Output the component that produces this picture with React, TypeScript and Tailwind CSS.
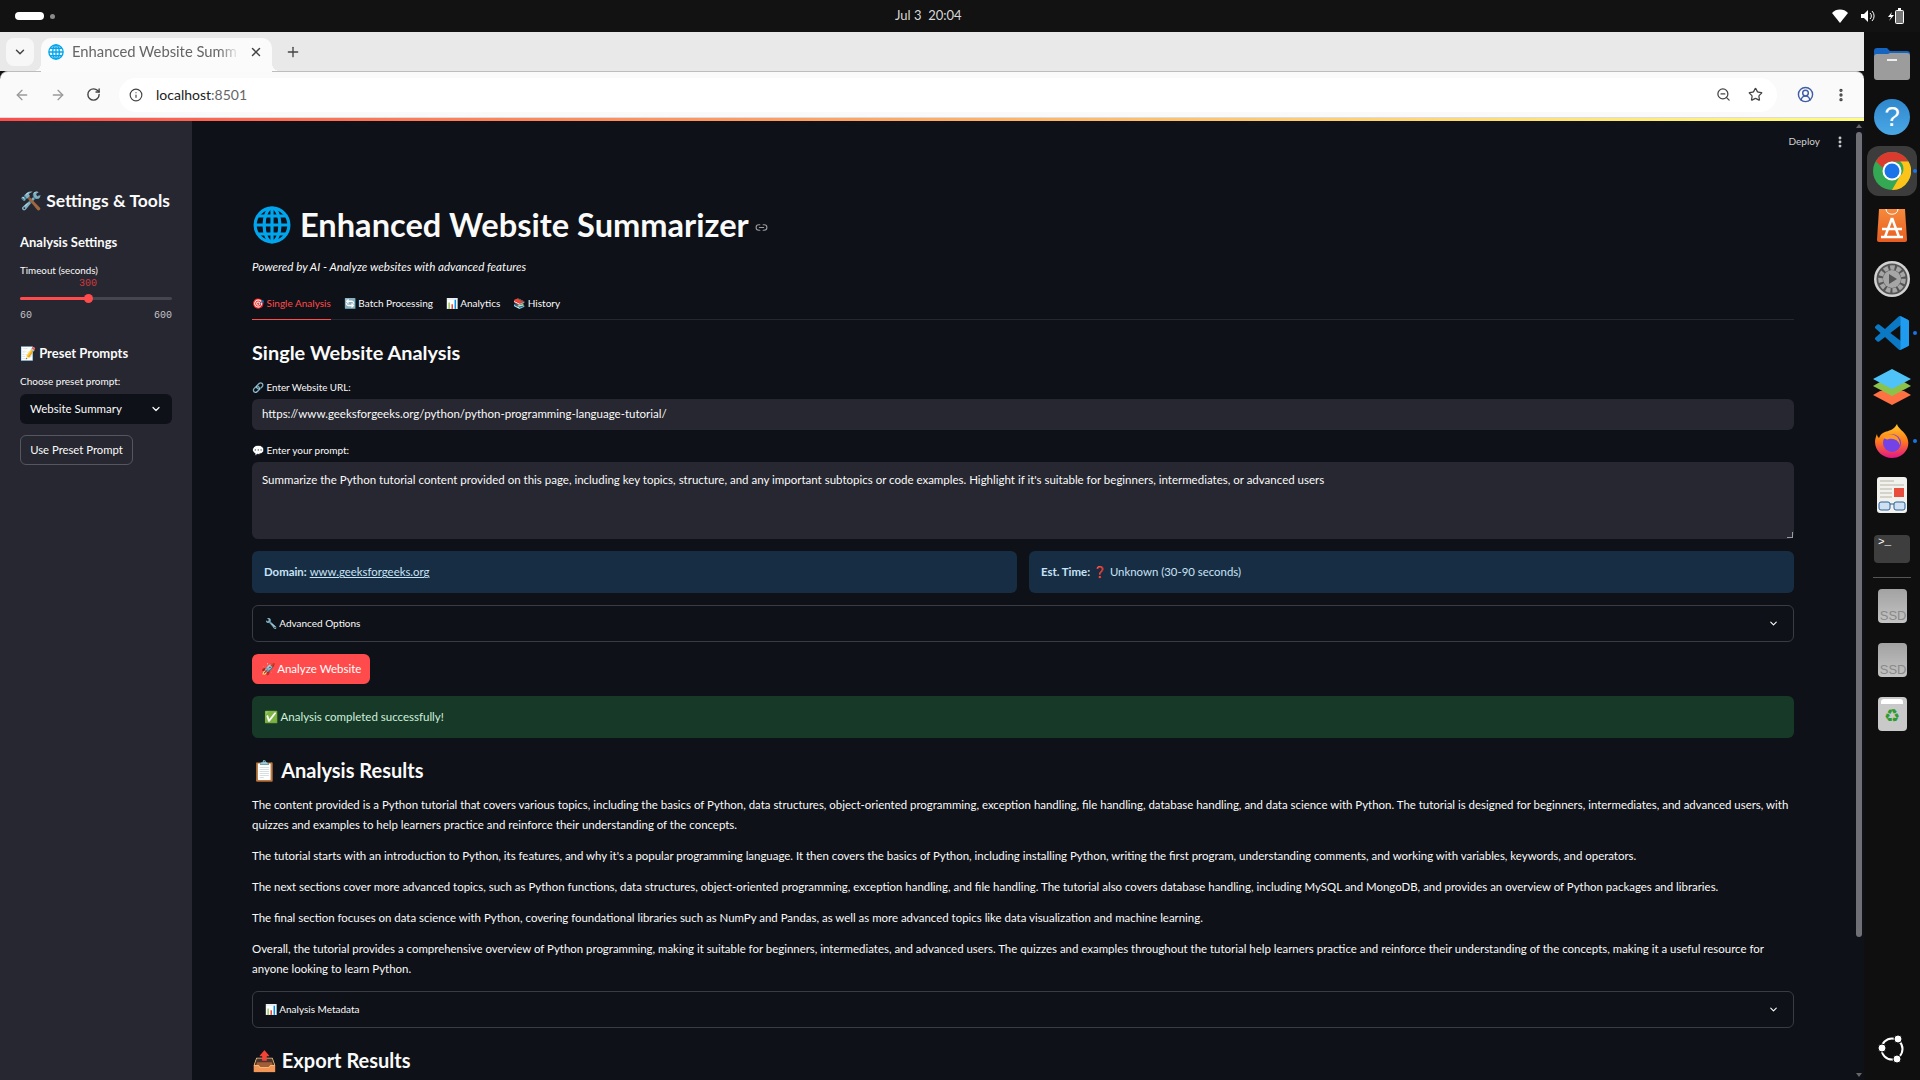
import { ChevronDown, X, Plus, ArrowLeft, ArrowRight, RotateCw, Info, ZoomOut, Star, CircleUserRound, EllipsisVertical, Link2 } from "lucide-react";

const paragraphs = [
  "The content provided is a Python tutorial that covers various topics, including the basics of Python, data structures, object-oriented programming, exception handling, file handling, database handling, and data science with Python. The tutorial is designed for beginners, intermediates, and advanced users, with quizzes and examples to help learners practice and reinforce their understanding of the concepts.",
  "The tutorial starts with an introduction to Python, its features, and why it's a popular programming language. It then covers the basics of Python, including installing Python, writing the first program, understanding comments, and working with variables, keywords, and operators.",
  "The next sections cover more advanced topics, such as Python functions, data structures, object-oriented programming, exception handling, and file handling. The tutorial also covers database handling, including MySQL and MongoDB, and provides an overview of Python packages and libraries.",
  "The final section focuses on data science with Python, covering foundational libraries such as NumPy and Pandas, as well as more advanced topics like data visualization and machine learning.",
  "Overall, the tutorial provides a comprehensive overview of Python programming, making it suitable for beginners, intermediates, and advanced users. The quizzes and examples throughout the tutorial help learners practice and reinforce their understanding of the concepts, making it a useful resource for anyone looking to learn Python.",
];

function Globe({ size }: { size: number }) {
  return (
    <svg width={size} height={size} viewBox="0 0 36 36" fill="none" stroke="#00a6ed" strokeWidth="3" className="shrink-0">
      <circle cx="18" cy="18" r="16" />
      <ellipse cx="18" cy="18" rx="7.5" ry="16" />
      <path d="M18 2v32M2 18h32M5 9.500h26M5 26.500h26" />
    </svg>
  );
}

function DockSlot({ children }: { children: React.ReactNode }) {
  return <div className="flex h-[54px] shrink-0 items-center justify-center">{children}</div>;
}

function RunDot({ top, right }: { top: string; right: string }) {
  return <span className={`absolute ${top} ${right} h-[4px] w-[4px] rounded-full bg-[#1a73e8]`} />;
}

function Ssd() {
  return (
    <div className="flex h-[34px] w-[29px] items-end justify-end overflow-hidden rounded-[4px] bg-gradient-to-b from-[#a2a2a2] to-[#c4c4c4] font-['Liberation_Sans',sans-serif] text-[13px] leading-[15px] text-[#8a8a8a]">SSD</div>
  );
}

function Dock() {
  return (
    <div className="flex h-full w-[56px] shrink-0 flex-col items-center bg-[#0f0f0f] pt-[4px]">
      <DockSlot>
        <svg width="36" height="33" viewBox="0 0 36 33">
          <path d="M0 4a3 3 0 0 1 3-3h10l3 3h17a3 3 0 0 1 3 3v8H0z" fill="#1565c0" />
          <path d="M0 10a3 3 0 0 1 3-3h11l2-1h17a3 3 0 0 1 3 3v21a3 3 0 0 1-3 3H3a3 3 0 0 1-3-3z" fill="#9c9c9c" />
          <rect x="13" y="12" width="10" height="2" fill="#eee" />
        </svg>
      </DockSlot>
      <DockSlot>
        <div className="flex h-[36px] w-[36px] items-center justify-center rounded-full bg-gradient-to-b from-[#2f87cc] to-[#4aa8e6] font-['Liberation_Sans',sans-serif] text-[28px] text-white">?</div>
      </DockSlot>
      <DockSlot>
        <div className="relative flex h-[50px] w-[50px] items-center justify-center rounded-[12px] bg-[#3c3c3c]">
          <svg width="38" height="38" viewBox="0 0 38 38">
            <circle cx="19" cy="19" r="19" fill="#34a853" />
            <path d="M19 0a19 19 0 0 1 16.500 9.500H19a9.500 9.500 0 0 0-9 6.500L2.800 9.200A19 19 0 0 1 19 0z" fill="#db3a2e" />
            <path d="M35.500 9.500A19 19 0 0 1 19 38l8.200-14.200A9.500 9.500 0 0 0 27.200 9.500z" fill="#fcc419" />
            <circle cx="19" cy="19" r="9.500" fill="#fff" />
            <circle cx="19" cy="19" r="7.500" fill="#1a73e8" />
          </svg>
          <RunDot top="top-[23px]" right="right-0" />
        </div>
      </DockSlot>
      <DockSlot>
        <svg width="30" height="34" viewBox="0 0 30 34">
          <defs>
            <linearGradient id="store" x1="0" y1="0" x2="0" y2="1">
              <stop offset="0" stopColor="#f58a3c" />
              <stop offset="1" stopColor="#e85d20" />
            </linearGradient>
          </defs>
          <path d="M2 1h26l2 31a2 2 0 0 1-2 2H2a2 2 0 0 1-2-2z" fill="url(#store)" />
          <path d="M9 1c0 7 12 7 12 0" fill="none" stroke="#fff" strokeWidth="1" />
          <path d="M15 10l7 19M15 10L8 29M5 21h20M4 29h22" stroke="#fff" strokeWidth="2.500" fill="none" />
        </svg>
      </DockSlot>
      <DockSlot>
        <svg width="36" height="36" viewBox="0 0 36 36">
          <circle cx="18" cy="18" r="18" fill="#d2d2d2" />
          <circle cx="18" cy="18" r="15.500" fill="#555" />
          <circle cx="18" cy="18" r="11.500" fill="none" stroke="#a6a6a6" strokeWidth="4.500" strokeDasharray="4.500 2" />
          <circle cx="18" cy="18" r="9" fill="#a6a6a6" />
          <path d="M15 13l8 5-8 5z" fill="#555" />
        </svg>
      </DockSlot>
      <DockSlot>
        <div className="relative">
          <svg width="34" height="34" viewBox="0 0 100 100" className="block">
            <path fillRule="evenodd" d="M96.500 10.800L75.900.9a6.200 6.200 0 0 0-7.100 1.200L29.400 38 12.200 25a4.200 4.200 0 0 0-5.300.2l-5.500 5a4.200 4.200 0 0 0 0 6.200L16.300 50 1.400 63.600a4.200 4.200 0 0 0 0 6.200l5.500 5a4.200 4.200 0 0 0 5.300.2l17.200-13 39.400 35.900a6.200 6.200 0 0 0 7.100 1.200l20.600-9.900a6.200 6.200 0 0 0 3.500-5.600V16.400a6.200 6.200 0 0 0-3.500-5.600zM75 72.700L45.100 50 75 27.300z" fill="#0b78c4" />
            <path d="M72 .5l3.900.4 20.600 9.900a6.200 6.200 0 0 1 3.500 5.600v67.200a6.200 6.200 0 0 1-3.500 5.600L75.900 99.100l-3.900.4 3-2V2.500z" fill="#1f9cf0" />
          </svg>
          <RunDot top="top-[15px]" right="right-[-8px]" />
        </div>
      </DockSlot>
      <DockSlot>
        <svg width="38" height="36" viewBox="0 0 38 36">
          <path d="M0 26l7-4h24l7 4-19 10z" fill="#ff7043" />
          <path d="M0 17l7-4h24l7 4-19 10z" fill="#8bc34a" />
          <path d="M0 10L19 0l19 10-19 10z" fill="#4fc3f7" />
        </svg>
      </DockSlot>
      <DockSlot>
        <div className="relative">
          <svg width="34" height="34" viewBox="0 0 34 34" className="block">
            <defs>
              <linearGradient id="fox" x1="0" y1="0" x2="0" y2="1">
                <stop offset="0" stopColor="#ffcb2e" />
                <stop offset="0.5" stopColor="#ff7a1a" />
                <stop offset="1" stopColor="#e31587" />
              </linearGradient>
            </defs>
            <path d="M22 0c1 4 5 6 8 10 4 5 4 11 2 15-3 6-9 9-15 9C8 34 0 27 0 18c0-3 1-6 2-8 0 2 1 3 2 4 1-3 3-5 6-6 3-1 9-2 12-8z" fill="url(#fox)" />
            <circle cx="17" cy="19" r="9" fill="#7542e5" />
            <path d="M8 13c3-3 9-4 13-1 3 2 4 6 4 9-2-5-6-7-11-6-2 1-4 0-6-2z" fill="#ff9a1f" />
          </svg>
          <RunDot top="top-[15px]" right="right-[-8px]" />
        </div>
      </DockSlot>
      <DockSlot>
        <svg width="30" height="36" viewBox="0 0 30 36">
          <rect width="30" height="36" rx="3" fill="#f1f1ee" />
          <path d="M3 4h14M3 8h24M3 12h12M3 16h12M3 20h12" stroke="#b9b3a6" strokeWidth="1.200" />
          <rect x="17" y="11" width="10" height="9" fill="#e74c3c" />
          <rect x="2" y="25" width="11" height="8" rx="2" fill="#cfe0f2" stroke="#2c5f96" />
          <rect x="17" y="25" width="11" height="8" rx="2" fill="#cfe0f2" stroke="#2c5f96" />
          <path d="M13 27h4" stroke="#2c5f96" />
        </svg>
      </DockSlot>
      <DockSlot>
        <div className="h-[28px] w-[36px] rounded-[4px] bg-[#3e3e3e] px-[4px] font-['Liberation_Mono',monospace] text-[11px] leading-[14px] text-white">&gt;_</div>
      </DockSlot>
      <div className="my-[1px] h-px w-[38px] shrink-0 bg-[#555]" />
      <DockSlot><Ssd /></DockSlot>
      <DockSlot><Ssd /></DockSlot>
      <DockSlot>
        <div className="flex h-[34px] w-[29px] flex-col items-center rounded-[4px] bg-[#c9c9c9] pt-[2px]">
          <div className="h-[5px] w-[22px] rounded-t-[3px] bg-white" />
          <span className="text-[18px] leading-[22px] text-[#2e9b2e]">♻</span>
        </div>
      </DockSlot>
      <div className="mt-auto mb-[17px]">
        <svg width="28" height="28" viewBox="0 0 28 28" fill="none">
          <circle cx="14" cy="14" r="10.500" stroke="#fff" strokeWidth="2" />
          <circle cx="4" cy="13" r="4" fill="#fff" stroke="#0f0f0f" strokeWidth="1" />
          <circle cx="20" cy="4" r="4" fill="#fff" stroke="#0f0f0f" strokeWidth="1" />
          <circle cx="19" cy="24" r="4" fill="#fff" stroke="#0f0f0f" strokeWidth="1" />
        </svg>
      </div>
    </div>
  );
}

function Sidebar() {
  return (
    <aside className="flex h-full w-[192px] shrink-0 flex-col bg-[#262730] px-[20px] text-[#fafafa]">
      <h2 className="mt-[67px] text-[17.500px] leading-[26px] font-bold whitespace-nowrap">🛠️ Settings &amp; Tools</h2>
      <h3 className="mt-[18px] text-[13px] leading-[20px] font-bold">Analysis Settings</h3>
      <div className="mt-[10px] text-[9.800px] leading-[16px]">Timeout (seconds)</div>
      <div className="relative h-[44px]">
        <span className="absolute left-[59px] top-[-1px] font-['Liberation_Mono',monospace] text-[10px] leading-[14px] text-[#d0393f]">300</span>
        <div className="absolute left-0 right-0 top-[19px] h-[3px] rounded-full bg-[#44454f]" />
        <div className="absolute left-0 top-[19px] h-[3px] w-[68px] rounded-full bg-[#ff4b4b]" />
        <div className="absolute left-[64px] top-[16px] h-[9px] w-[9px] rounded-full bg-[#ff4b4b]" />
        <span className="absolute left-0 top-[31px] font-['Liberation_Mono',monospace] text-[10px] leading-[14px] text-[#c4c4c8]">60</span>
        <span className="absolute right-0 top-[31px] font-['Liberation_Mono',monospace] text-[10px] leading-[14px] text-[#c4c4c8]">600</span>
      </div>
      <h3 className="mt-[21px] text-[13px] leading-[20px] font-bold whitespace-nowrap">📝 Preset Prompts</h3>
      <div className="mt-[10px] text-[10px] leading-[16px]">Choose preset prompt:</div>
      <div className="mt-[5px] flex h-[30px] items-center justify-between rounded-[6px] bg-[#0e1117] pl-[10px] pr-[10px] text-[11.500px]">
        Website Summary
        <ChevronDown size={12} strokeWidth={2.5} />
      </div>
      <div className="mt-[11px] flex h-[30px] w-[113px] items-center justify-center rounded-[6px] border border-[#55565f] text-[11.300px] whitespace-nowrap">Use Preset Prompt</div>
    </aside>
  );
}

function Expander({ label, className }: { label: string; className: string }) {
  return (
    <div className={`flex h-[37px] items-center justify-between rounded-[6px] border border-[#3a3c44] pl-[12px] pr-[14px] text-[10px] ${className}`}>
      <span>{label}</span>
      <ChevronDown size={11} strokeWidth={2.5} />
    </div>
  );
}

function MainContent() {
  return (
    <main className="relative h-full min-w-0 flex-1 overflow-hidden bg-[#0e1117] text-[#fafafa]">
      <div className="absolute right-[17px] top-[13px] flex items-center gap-[13px] text-[10px] text-[#d0d0d0]">
        Deploy
        <EllipsisVertical size={14} strokeWidth={3} />
      </div>
      <div className="absolute right-[2px] top-0 flex h-full w-[6px] flex-col items-center">
        <div className="mt-[3px] h-0 w-0 border-x-[3px] border-b-[4px] border-x-transparent border-b-[#666]" />
        <div className="mt-[4px] h-[805px] w-[6px] rounded-[3px] bg-[#6f7075]" />
        <div className="mt-auto mb-[3px] h-0 w-0 border-x-[3px] border-t-[4px] border-x-transparent border-t-[#666]" />
      </div>
      <div className="ml-[60px] mr-[70px] pt-[86px]">
        <div className="flex h-[36px] items-center">
          <div className="ml-[1px]"><Globe size={38} /></div>
          <h1 className="ml-[9px] text-[32.600px] leading-[36px] font-bold whitespace-nowrap">Enhanced Website Summarizer</h1>
          <Link2 size={13} className="ml-[6px] mt-[4px] text-[#9a9aa0]" />
        </div>
        <p className="mt-[15px] text-[11.600px] leading-[18px] italic">Powered by AI - Analyze websites with advanced features</p>
        <div className="mt-[18px] flex h-[26px] gap-[13px] border-b border-[#262730] text-[10px] leading-[18px]">
          <span className="h-[26px] border-b border-[#ff4b4b] text-[#ff4b4b]">🎯 Single Analysis</span>
          <span>🔄 Batch Processing</span>
          <span>📊 Analytics</span>
          <span>📚 History</span>
        </div>
        <h2 className="mt-[18px] text-[19.900px] leading-[28px] font-bold">Single Website Analysis</h2>
        <div className="mt-[14px] text-[9.800px] leading-[14px]">🔗 Enter Website URL:</div>
        <div className="mt-[5px] flex h-[31px] items-center rounded-[6px] bg-[#262730] px-[10px] pb-[1px] text-[11.500px]">https://www.geeksforgeeks.org/python/python-programming-language-tutorial/</div>
        <div className="mt-[13px] text-[10px] leading-[14px]">💬 Enter your prompt:</div>
        <div className="relative mt-[5px] h-[77px] rounded-[6px] bg-[#262730] px-[10px] pt-[8px] text-[11.500px] leading-[20px]">
          Summarize the Python tutorial content provided on this page, including key topics, structure, and any important subtopics or code examples. Highlight if it's suitable for beginners, intermediates, or advanced users
          <div className="absolute bottom-[1px] right-[1px] h-[6px] w-[6px] border-b border-r border-[#9a9aa0]" />
        </div>
        <div className="mt-[12px] grid grid-cols-2 gap-[12px] text-[11.400px] text-[#c7e3f7]">
          <div className="flex h-[42px] items-center rounded-[6px] bg-[#172d43] px-[12px]">
            <b className="font-bold">Domain:</b>&nbsp;<span className="underline">www.geeksforgeeks.org</span>
          </div>
          <div className="flex h-[42px] items-center rounded-[6px] bg-[#172d43] px-[12px]">
            <b className="font-bold">Est. Time:</b>&nbsp;❓ Unknown (30-90 seconds)
          </div>
        </div>
        <Expander label="🔧 Advanced Options" className="mt-[12px]" />
        <div className="mt-[12px] flex h-[30px] w-[118px] items-center justify-center rounded-[6px] bg-[#ff4b4b] text-[11.500px] text-white">🚀 Analyze Website</div>
        <div className="mt-[12px] flex h-[42px] items-center rounded-[6px] bg-[#173928] px-[12px] text-[11.500px] text-[#d0f0dc]">✅ Analysis completed successfully!</div>
        <h2 className="mt-[18px] text-[20px] leading-[28px] font-bold">📋 Analysis Results</h2>
        <div className="mt-[11px] flex flex-col gap-[11px] text-[11.450px] leading-[20px]">
          {paragraphs.map((p) => (
            <p key={p.slice(0, 20)}>{p}</p>
          ))}
        </div>
        <Expander label="📊 Analysis Metadata" className="mt-[12px]" />
        <h2 className="mt-[18px] text-[20px] leading-[28px] font-bold">📤 Export Results</h2>
      </div>
    </main>
  );
}

export default function App() {
  return (
    <div className="flex h-[1080px] w-[1920px] flex-col overflow-hidden bg-[#121212] font-['Lato',sans-serif]">
      {/* gnome top bar */}
      <div className="relative flex h-[32px] shrink-0 items-center justify-between bg-[#121212] pl-[15px] pr-[16px] text-white">
        <div className="flex items-center gap-[6px]">
          <div className="h-[8px] w-[29px] rounded-full bg-white" />
          <div className="h-[5px] w-[5px] rounded-full bg-[#8a8a8a]" />
        </div>
        <span className="absolute left-[895px] text-[13px] text-[#d8d8d8] whitespace-pre">Jul 3  20:04</span>
        <div className="flex items-center gap-[13px]">
          <svg width="16" height="14" viewBox="0 0 16 14"><path d="M0 4a11 11 0 0 1 16 0l-8 10z" fill="#fff" /></svg>
          <svg width="14" height="14" viewBox="0 0 14 14"><path d="M0 5h3l4-4v12l-4-4H0z" fill="#fff" /><path d="M9 4a4 4 0 0 1 0 6M11 2a7 7 0 0 1 0 10" stroke="#fff" fill="none" /></svg>
          <svg width="16" height="16" viewBox="0 0 16 16"><path d="M4 4L0 9h3l-2 4 5-6H3z" fill="#fff" /><rect x="7.500" y="2.500" width="8" height="13" rx="1" fill="#777" stroke="#fff" /><rect x="10" y="0" width="3" height="2" fill="#fff" /></svg>
        </div>
      </div>
      <div className="flex min-h-0 flex-1">
        <div className="flex min-w-0 flex-1 flex-col">
          {/* chrome tab strip */}
          <div className="flex h-[39px] shrink-0 items-end bg-[#e9e9e9] pl-[6px] text-[#444]">
            <div className="mb-[5px] flex h-[28px] w-[28px] items-center justify-center rounded-[8px] bg-[#f7f7f7]">
              <ChevronDown size={14} strokeWidth={2.5} />
            </div>
            <div className="relative z-10 mb-[-1px] ml-[7px] flex h-[34px] w-[231px] items-center rounded-t-[10px] bg-[#fbfbfb] pb-[7px] pl-[7px]">
              <span className="absolute bottom-[1px] left-[-8px] h-[8px] w-[8px] bg-[radial-gradient(circle_at_0_0,transparent_8px,#fbfbfb_8px)]" />
              <span className="absolute bottom-[1px] right-[-8px] h-[8px] w-[8px] bg-[radial-gradient(circle_at_100%_0,transparent_8px,#fbfbfb_8px)]" />
              <Globe size={16} />
              <span className="ml-[8px] w-[167px] text-[14.800px] whitespace-nowrap text-[#666] [mask-image:linear-gradient(to_right,black_88%,transparent)]">Enhanced Website Summ</span>
              <X size={14} strokeWidth={2.5} className="ml-[10px]" />
            </div>
            <Plus size={16} strokeWidth={2} className="mb-[11px] ml-[13px]" />
          </div>
          {/* chrome toolbar */}
          <div className="flex h-[47px] shrink-0 items-center rounded-t-[8px] border-t border-b border-t-[#bdbdbd] border-b-[#dcdcdc] bg-[#fafafa] pl-[14px] text-[#444]">
            <ArrowLeft size={16} className="text-[#9a9a9a]" />
            <ArrowRight size={16} className="ml-[20px] text-[#9a9a9a]" />
            <RotateCw size={15} strokeWidth={2.2} className="ml-[20px]" />
            <div className="ml-[18px] flex h-[34px] w-[1658px] items-center rounded-full bg-white pl-[10px] pr-[14px]">
              <Info size={14} />
              <span className="ml-[13px] text-[14px] text-[#222]">localhost<span className="text-[#666]">:8501</span></span>
              <ZoomOut size={15} className="ml-auto" />
              <Star size={15} className="ml-[17px]" />
            </div>
            <CircleUserRound size={17} className="ml-[20px] text-[#3f5ea8]" />
            <EllipsisVertical size={16} strokeWidth={3} className="ml-[19px]" />
          </div>
          <div className="h-[3px] shrink-0 bg-gradient-to-r from-[#ff4b4b] to-[#fffd80]" />
          <div className="flex min-h-0 flex-1">
            <Sidebar />
            <MainContent />
          </div>
        </div>
        <Dock />
      </div>
    </div>
  );
}
